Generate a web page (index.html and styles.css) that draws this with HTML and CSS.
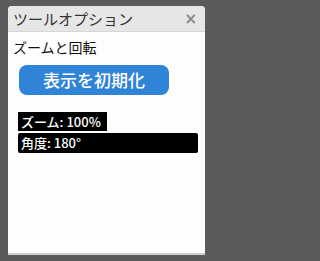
FILE: index.html
```html
<!DOCTYPE html>
<html lang="ja">
<head>
<meta charset="utf-8">
<link rel="stylesheet" href="styles.css">
</head>
<body>
<div class="panel">
  <div class="header">
    <span class="title">ツールオプション</span>
    <span class="close">×</span>
  </div>
  <div class="content">
    <div class="section">ズームと回転</div>
    <button class="reset">表示を初期化</button>
    <div class="info">
      <div class="stat stat-zoom">ズーム: 100%</div>
      <div class="stat stat-angle">角度: 180°</div>
    </div>
  </div>
</div>
</body>
</html>
```
FILE: styles.css
```css
html, body {
  margin: 0;
  padding: 0;
}
body {
  background: #5b5b5b;
  min-height: 261px;
  padding: 6px 0 0 8px;
  box-sizing: border-box;
  font-family: "Noto Sans CJK JP", "Noto Sans", sans-serif;
}
.panel {
  width: 197px;
  height: 249px;
  background: #fdfdfd;
  border-radius: 4px 4px 0 0;
  border-bottom: 2px solid #cfcfcf;
  box-sizing: border-box;
  overflow: hidden;
  display: flex;
  flex-direction: column;
}
.header {
  height: 26px;
  background: #e6e6e6;
  border-bottom: 1px solid #d6d6d6;
  box-sizing: border-box;
  display: flex;
  align-items: center;
  justify-content: space-between;
  padding: 0 8px 0 5px;
}
.title {
  font-size: 15px;
  color: #333;
  line-height: 20px;
}
.close {
  font-size: 15px;
  font-weight: bold;
  color: #888;
  line-height: 20px;
  font-family: "DejaVu Sans", sans-serif;
}
.content {
  padding: 0 5px;
  display: flex;
  flex-direction: column;
  align-items: flex-start;
}
.section {
  margin-top: 5px;
  font-size: 14px;
  line-height: 20px;
  color: #111;
}
.reset {
  margin: 8px 0 0 6px;
  width: 150px;
  height: 30px;
  border: none;
  border-radius: 8px;
  background: #2f84d8;
  color: #fff;
  font-family: "Noto Sans CJK JP", "Noto Sans", sans-serif;
  font-size: 17px;
  font-weight: 500;
  line-height: 30px;
  padding: 0;
}
.info {
  margin: 17px 0 0 5px;
  display: flex;
  flex-direction: column;
  gap: 2px;
  align-self: stretch;
  padding-right: 2px;
}
.stat {
  background: #000;
  color: #fff;
  font-size: 13px;
  font-weight: 500;
  line-height: 19px;
  height: 19px;
  padding: 0 3px;
  box-sizing: border-box;
  white-space: nowrap;
}
.stat-zoom {
  width: 89px;
}
.stat-angle {
  height: 20px;
  line-height: 20px;
  border-radius: 2px;
}
```
